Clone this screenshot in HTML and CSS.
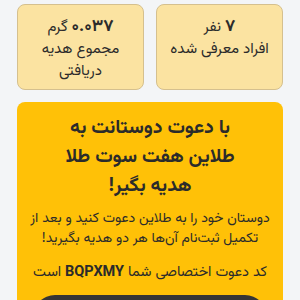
FILE: index.html
```html
<!DOCTYPE html>
<html lang="fa" dir="rtl">
<head>
<meta charset="utf-8">
<link rel="stylesheet" href="styles.css">
</head>
<body>
<div class="page">
  <div class="stats">
    <div class="card">
      <div class="num"><b>۷</b> نفر</div>
      <div class="label">افراد معرفی شده</div>
    </div>
    <div class="card">
      <div class="num"><b>۰.۰۳۷</b> گرم</div>
      <div class="label">مجموع هدیه<br>دریافتی</div>
    </div>
  </div>
  <div class="promo">
    <h2 class="title">با دعوت دوستانت به<br>طلاین هفت سوت طلا<br>هدیه بگیر!</h2>
    <p class="desc">دوستان خود را به طلاین دعوت کنید و بعد از<br>تکمیل ثبت‌نام آن‌ها هر دو هدیه بگیرید!</p>
    <p class="code">کد دعوت اختصاصی شما <b>BQPXMY</b> است</p>
    <div class="btn"></div>
  </div>
</div>
</body>
</html>
```
FILE: styles.css
```css
html, body {
  margin: 0;
  padding: 0;
}
body {
  background: #f3f5f7;
  font-family: "Vazirmatn", "Noto Sans Arabic", "DejaVu Sans", sans-serif;
  color: #2b2b2b;
  direction: rtl;
  overflow: hidden;
  height: 300px;
}
.page {
  padding: 4px 17px 0;
}
.stats {
  display: grid;
  grid-template-columns: 1fr 1fr;
  gap: 12px;
}
.card {
  height: 86px;
  box-sizing: border-box;
  background: #fbe3a1;
  border: 1px solid #d5c08e;
  border-radius: 8px;
  text-align: center;
  padding-top: 11px;
  font-size: 15px;
  line-height: 22px;
}
.num b {
  font-size: 17px;
}
.promo {
  margin-top: 12px;
  background: #ffc107;
  border-radius: 8px;
  padding: 12px 12px 0;
  height: 220px;
  text-align: center;
}
.title {
  margin: 0;
  font-size: 19.5px;
  font-weight: bold;
  line-height: 29px;
}
.desc {
  margin: 8px 0 0;
  font-size: 14px;
  line-height: 20px;
  white-space: nowrap;
}
.code {
  margin: 13px 0 0;
  font-size: 14.5px;
  line-height: 20px;
  white-space: nowrap;
}
.code b {
  font-family: "Roboto", "Liberation Sans", sans-serif;
  font-weight: bold;
}
.btn {
  margin-top: 12px;
  height: 44px;
  background: #353535;
  border-radius: 22px;
  margin-left: 4px;
  margin-right: 4px;
}
```
